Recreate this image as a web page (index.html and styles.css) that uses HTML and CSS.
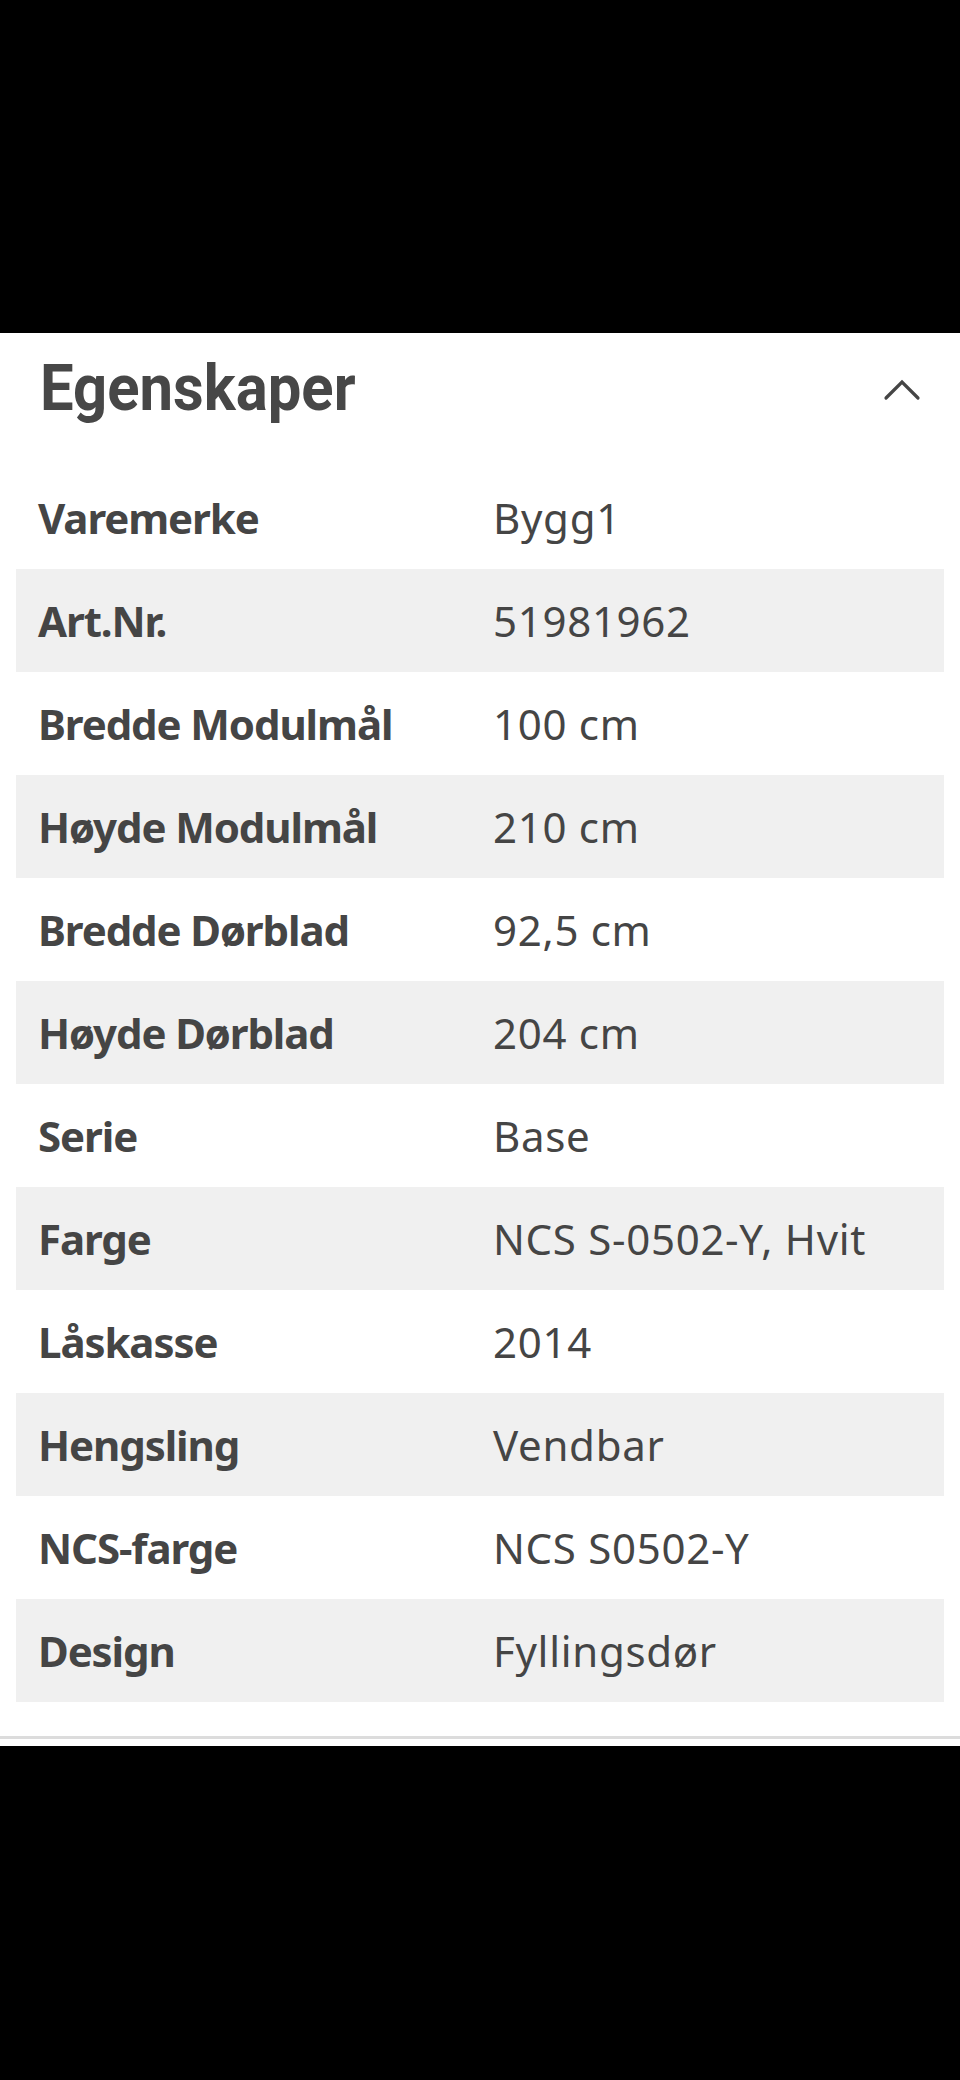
FILE: index.html
```html
<!DOCTYPE html>
<html lang="no">
<head>
<meta charset="utf-8">
<title>Egenskaper</title>
<link rel="stylesheet" href="styles.css">
</head>
<body>
<div class="top-space"></div>
<section class="panel">
  <header class="panel-head">
    <h2 class="panel-title">Egenskaper</h2>
    <svg class="chevron" width="40" height="24" viewBox="0 0 40 24" aria-hidden="true">
      <path d="M4 20 L20 4 L36 20" fill="none" stroke="#454545" stroke-width="3.2" stroke-linecap="round" stroke-linejoin="miter"/>
    </svg>
  </header>
  <div class="specs">
    <div class="row"><div class="label">Varemerke</div><div class="value">Bygg1</div></div>
    <div class="row alt"><div class="label">Art.Nr.</div><div class="value">51981962</div></div>
    <div class="row"><div class="label">Bredde Modulmål</div><div class="value">100 cm</div></div>
    <div class="row alt"><div class="label">Høyde Modulmål</div><div class="value">210 cm</div></div>
    <div class="row"><div class="label">Bredde Dørblad</div><div class="value">92,5 cm</div></div>
    <div class="row alt"><div class="label">Høyde Dørblad</div><div class="value">204 cm</div></div>
    <div class="row"><div class="label">Serie</div><div class="value">Base</div></div>
    <div class="row alt"><div class="label">Farge</div><div class="value">NCS S-0502-Y, Hvit</div></div>
    <div class="row"><div class="label">Låskasse</div><div class="value">2014</div></div>
    <div class="row alt"><div class="label">Hengsling</div><div class="value">Vendbar</div></div>
    <div class="row"><div class="label">NCS-farge</div><div class="value">NCS S0502-Y</div></div>
    <div class="row alt"><div class="label">Design</div><div class="value">Fyllingsdør</div></div>
  </div>
  <div class="panel-foot"></div>
</section>
</body>
</html>
```
FILE: styles.css
```css
html, body {
  margin: 0;
  padding: 0;
  background: #000;
}
body {
  width: 960px;
  height: 2080px;
  font-family: "Noto Sans", "Open Sans", sans-serif;
  color: #454545;
}
.top-space {
  height: 333px;
  background: #000;
}
.panel {
  background: #fff;
  padding: 0 0 7px;
}
.panel-head {
  height: 110px;
  margin-bottom: 23px;
  padding: 0 38px 0 40px;
  display: flex;
  align-items: center;
  justify-content: space-between;
}
.panel-title {
  margin: 0;
  font-family: "Roboto", sans-serif;
  font-weight: 700;
  font-size: 65px;
  line-height: 64px;
  color: #474747;
  transform: scaleX(0.92);
  transform-origin: left center;
}
.chevron {
  display: block;
  margin-top: 4px;
}
.specs {
  margin: 0 16px;
}
.row {
  display: grid;
  grid-template-columns: 455px 1fr;
  height: 103px;
  align-items: center;
  padding-left: 22px;
}
.row.alt {
  background: #f0f0f0;
}
.label {
  font-weight: 700;
  font-size: 42px;
  letter-spacing: -1.1px;
}
.value {
  font-weight: 400;
  font-size: 42px;
  letter-spacing: 0.7px;
}
.panel-foot {
  height: 34px;
  border-bottom: 3px solid #dcdcdc;
}
```
